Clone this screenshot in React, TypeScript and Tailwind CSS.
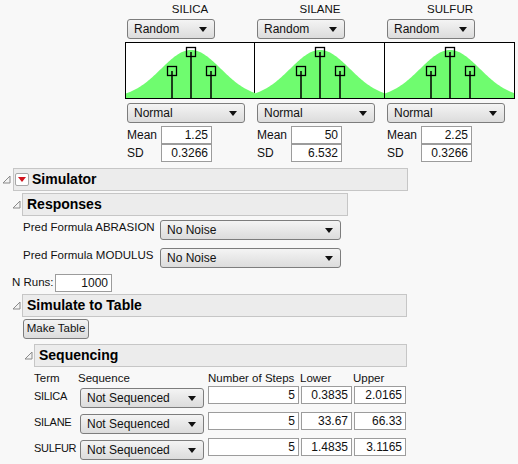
import React from "react";

const FONT = "font-['Liberation_Sans',Arial,sans-serif]";

function Arrow() {
  return (
    <svg width="8" height="5" viewBox="0 0 8 5" className="shrink-0">
      <path d="M0 0 L8 0 L4 5 Z" fill="#111" />
    </svg>
  );
}

function Select({ label, w, className = "" }: { label: string; w: string; className?: string }) {
  return (
    <div
      className={`${w} h-[20px] rounded-[3px] border border-[#7d7d7d] bg-linear-to-b from-[#f4f4f4] to-[#dcdcdc] flex items-center justify-between pl-[6px] pr-[7px] text-[12px] text-[#111] whitespace-nowrap ${className}`}
    >
      <span>{label}</span>
      <Arrow />
    </div>
  );
}

function Field({ value, w }: { value: string; w: string }) {
  return (
    <div className={`${w} h-[18px] bg-white border border-[#9c9c9c] flex items-center justify-end pr-[3px] text-[12px] text-[#111]`}>
      {value}
    </div>
  );
}

function Disclosure() {
  return (
    <svg width="9" height="9" viewBox="0 0 9 9" className="shrink-0">
      <path d="M8 1 L8 8 L1 8 Z" fill="#f4f4f4" stroke="#8a8a8a" strokeWidth="1" />
    </svg>
  );
}

function Header({ title, w, red }: { title: string; w: string; red?: boolean }) {
  return (
    <div className={`${w} h-[23px] bg-[#ececec] border border-[#c6c6c6] flex items-center gap-[2px] pl-[1px] text-[14px] font-bold text-black whitespace-nowrap`}>
      {red && (
        <div className="w-[14px] h-[13px] mr-[1px] bg-white border border-[#a8a8a8] rounded-[2px] flex items-center justify-center">
          <svg width="8" height="5" viewBox="0 0 8 5">
            <path d="M0 0 L8 0 L4 5 Z" fill="#d2141e" />
          </svg>
        </div>
      )}
      <span className={red ? "" : "pl-[3px]"}>{title}</span>
    </div>
  );
}

function Curve() {
  const w = 129;
  const h = 55;
  const cx = 65;
  const s = 30;
  const peak = 48;
  const pts: string[] = [];
  for (let x = 0; x <= w; x += 1) {
    const y = h - peak * Math.exp(-((x - cx) * (x - cx)) / (2 * s * s));
    pts.push(`${x},${y.toFixed(2)}`);
  }
  const marks = [
    { x: cx - 19, y: 28 },
    { x: cx, y: 9 },
    { x: cx + 20, y: 28 },
  ];
  return (
    <svg width={w} height={h} viewBox={`0 0 ${w} ${h}`} className="block">
      <polygon points={`0,${h} ${pts.join(" ")} ${w},${h}`} fill="#6ffc6f" />
      {marks.map((m) => (
        <g key={m.x}>
          <line x1={m.x} y1={m.y} x2={m.x} y2={h} stroke="#000" strokeWidth="1.5" />
          <rect x={m.x - 4.5} y={m.y - 4.5} width="9" height="9" fill="none" stroke="#000" strokeWidth="1.3" />
        </g>
      ))}
    </svg>
  );
}

const factors = [
  { name: "SILICA", mean: "1.25", sd: "0.3266" },
  { name: "SILANE", mean: "50", sd: "6.532" },
  { name: "SULFUR", mean: "2.25", sd: "0.3266" },
];

const seq = [
  { term: "SILICA", steps: "5", lower: "0.3835", upper: "2.0165" },
  { term: "SILANE", steps: "5", lower: "33.67", upper: "66.33" },
  { term: "SULFUR", steps: "5", lower: "1.4835", upper: "3.1165" },
];

export default function App() {
  return (
    <div className={`w-[518px] h-[464px] overflow-hidden bg-[#f8f8f8] text-[12px] text-[#111] whitespace-nowrap ${FONT}`}>
      {/* Factor profiles */}
      <div className="flex pl-[125px] pt-[2px]">
        {factors.map((f, i) => (
          <div key={f.name} className="w-[130px] flex flex-col">
            <div className="h-[15px] text-center leading-[15px] text-[11.5px]">{f.name}</div>
            <Select label="Random" w="w-[88px]" className="ml-[2px] mt-[2px]" />
            <div className={`mt-[3px] h-[57px] border-y border-r border-black bg-white ${i === 0 ? "border-l" : ""}`}>
              <Curve />
            </div>
            <Select label="Normal" w="w-[118px]" className="ml-[2px] mt-[4px]" />
            <div className="flex items-center mt-[3px] ml-[2px]">
              <span className="w-[34px]">Mean</span>
              <Field value={f.mean} w="w-[51px]" />
            </div>
            <div className="flex items-center ml-[2px]">
              <span className="w-[34px]">SD</span>
              <Field value={f.sd} w="w-[51px]" />
            </div>
          </div>
        ))}
      </div>

      {/* Simulator */}
      <div className="flex items-center mt-[6px] pl-[2px] gap-[2px]">
        <Disclosure />
        <Header title="Simulator" w="w-[395px]" red />
      </div>

      <div className="flex items-center mt-[2px] pl-[12px] gap-[1px]">
        <Disclosure />
        <Header title="Responses" w="w-[326px]" />
      </div>

      <div className="pl-[23px] mt-[4px] flex flex-col gap-[8px] text-[11.5px]">
        <div className="flex items-start">
          <span className="w-[137px] leading-[14px]">Pred Formula ABRASION</span>
          <Select label="No Noise" w="w-[181px]" />
        </div>
        <div className="flex items-start">
          <span className="w-[137px] leading-[14px]">Pred Formula MODULUS</span>
          <Select label="No Noise" w="w-[181px]" />
        </div>
      </div>

      <div className="flex items-center pl-[12px] mt-[6px]">
        <span className="w-[43px] text-[11.5px]">N Runs:</span>
        <Field value="1000" w="w-[57px]" />
      </div>

      <div className="flex items-center mt-[2px] pl-[12px] gap-[1px]">
        <Disclosure />
        <Header title="Simulate to Table" w="w-[385px]" />
      </div>

      <div className="pl-[23px] mt-[2px]">
        <div className="w-[66px] h-[20px] rounded-[3px] border border-[#7d7d7d] bg-linear-to-b from-[#f4f4f4] to-[#dcdcdc] flex items-center justify-center text-[11.5px]">
          Make Table
        </div>
      </div>

      <div className="flex items-center mt-[5px] pl-[24px] gap-[1px]">
        <Disclosure />
        <Header title="Sequencing" w="w-[373px]" />
      </div>

      {/* Sequencing table */}
      <div className="pl-[34px] mt-[4px]">
        <div className="flex h-[15px] leading-[15px] text-[11.5px]">
          <span className="w-[44px]">Term</span>
          <span className="w-[130px]">Sequence</span>
          <span className="w-[92px]">Number of Steps</span>
          <span className="w-[53px]">Lower</span>
          <span>Upper</span>
        </div>
        {seq.map((r) => (
          <div key={r.term} className="flex items-start h-[26px]">
            <span className="w-[46px] leading-[14px] pt-[3px] text-[11px] tracking-[-0.3px]">{r.term}</span>
            <Select label="Not Sequenced" w="w-[124px]" className="mt-[2px]" />
            <div className="flex gap-[2px] ml-[4px]">
              <Field value={r.steps} w="w-[91px]" />
              <Field value={r.lower} w="w-[51px]" />
              <Field value={r.upper} w="w-[52px]" />
            </div>
          </div>
        ))}
      </div>
    </div>
  );
}
